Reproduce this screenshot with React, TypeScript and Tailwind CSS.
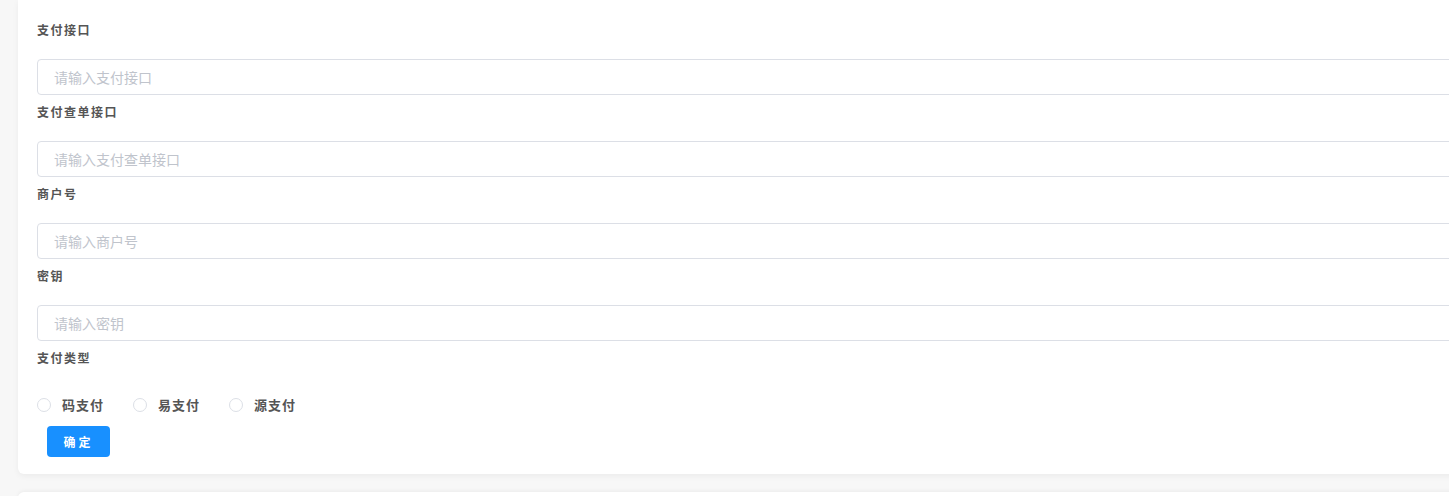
import { useState } from "react";

const fields = [
  { label: "支付接口", placeholder: "请输入支付接口" },
  { label: "支付查单接口", placeholder: "请输入支付查单接口" },
  { label: "商户号", placeholder: "请输入商户号" },
  { label: "密钥", placeholder: "请输入密钥" },
];

const types = ["码支付", "易支付", "源支付"];

export default function App() {
  const [type, setType] = useState("");

  return (
    <div
      className="h-[496px] w-[1449px] overflow-hidden bg-[#f7f7f7]"
      style={{ fontFamily: '"Noto Sans CJK SC", "Noto Sans", sans-serif' }}
    >
      <div className="ml-[18px] w-[1460px] rounded-b-md bg-white px-[19px] pt-[20px] pb-[17px] shadow-[0_2px_6px_rgba(0,0,0,0.05)]">
        {fields.map((f) => (
          <div key={f.label}>
            {/* Label */}
            <div className="mb-[19px] h-5 text-[12px] leading-5 font-semibold tracking-[1.5px] text-[#555]">
              {f.label}
            </div>
            <input
              className="mb-[7px] block h-9 w-full rounded border border-[#dcdfe6] px-[16px] text-[14px] text-[#606266] outline-none placeholder:text-[#c0c4cc]"
              placeholder={f.placeholder}
            />
          </div>
        ))}

        <div className="h-5 text-[12px] leading-5 font-semibold tracking-[1.5px] text-[#555]">
          支付类型
        </div>

        {/* Radio group */}
        <div className="mt-[27px] flex h-5 items-center">
          {types.map((t) => (
            <label
              key={t}
              className="flex w-[96px] cursor-pointer items-center"
              onClick={() => setType(t)}
            >
              <span
                className={
                  type === t
                    ? "h-[14px] w-[14px] rounded-full border-4 border-[#1890ff]"
                    : "h-[14px] w-[14px] rounded-full border border-[#dcdfe6]"
                }
              />
              <span className="ml-[11px] text-[13px] font-semibold tracking-[1px] text-[#555]">
                {t}
              </span>
            </label>
          ))}
        </div>

        <button className="mt-[11px] ml-[10px] h-[31px] w-[63px] rounded bg-[#1890ff] text-[12px] font-bold tracking-[3px] text-white">
          确定
        </button>
      </div>

      <div className="mt-[18px] ml-[18px] h-20 w-[1460px] rounded-t-md bg-white shadow-[0_-1px_4px_rgba(0,0,0,0.05)]" />
    </div>
  );
}
